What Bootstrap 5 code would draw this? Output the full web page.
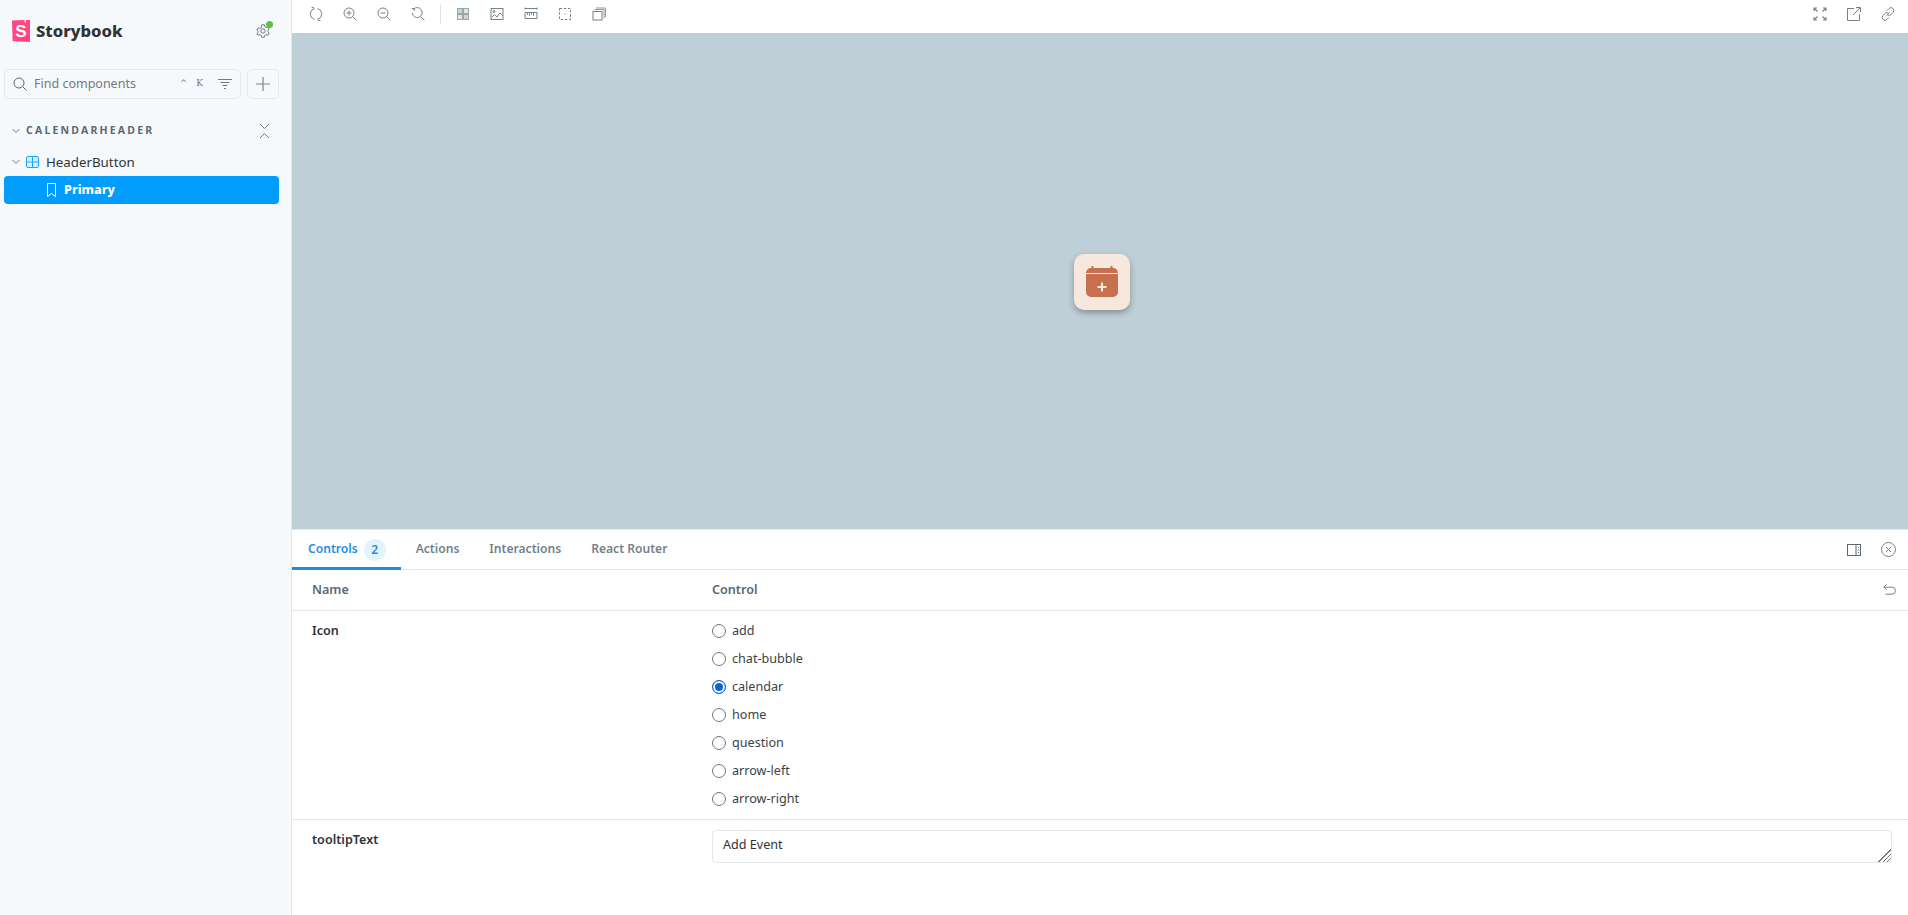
<!DOCTYPE html>
<html lang="en">
<head>
  <meta charset="UTF-8">
  <meta name="viewport" content="width=device-width, initial-scale=1.0">
  <title>Storybook - HeaderButton</title>
  <link href="https://cdn.jsdelivr.net/npm/bootstrap@5.3.0/dist/css/bootstrap.min.css" rel="stylesheet">
  <style>
    html, body {
      height: 100%;
    }
    body {
      font-family: "Noto Sans", "Open Sans", sans-serif;
      font-size: 12.6px;
      color: #2e3438;
      overflow: hidden;
    }
    svg {
      display: block;
      flex: none;
    }
    .sb-sidebar {
      width: 292px;
      height: 915px;
      flex: none;
      background: #f6f9fc;
      border-right: 1px solid #e3e8ec;
      padding: 20px 12px 0 4px;
    }
    .sb-brand {
      height: 22px;
      padding-left: 8px;
    }
    .sb-brand-name {
      margin-left: 6px;
      font-size: 16.6px;
      font-weight: 800;
      line-height: 22px;
      color: #333;
    }
    .sb-gear {
      margin-left: auto;
      margin-right: 9px;
      position: relative;
    }
    .sb-gear-dot {
      position: absolute;
      top: -3px;
      right: -3px;
      width: 7px;
      height: 7px;
      border-radius: 50%;
      background: #66bf3c;
    }
    .sb-search-row {
      margin-top: 27px;
      gap: 6px;
    }
    .sb-search {
      width: 237px;
      height: 30px;
      border: 1px solid #e4e9ed;
      border-radius: 5px;
      padding: 0 8px 0 8px;
      color: #6f7b83;
    }
    .sb-search-text {
      margin-left: 7px;
      font-size: 12.5px;
    }
    .sb-keys {
      margin-left: auto;
      margin-right: 15px;
      gap: 9px;
      font-size: 9px;
      font-family: "DejaVu Serif", serif;
    }
    .sb-plus {
      width: 32px;
      height: 30px;
      border: 1px solid #e4e9ed;
      border-radius: 5px;
    }
    .sb-section {
      height: 20px;
      margin-top: 22px;
      margin-bottom: -1px;
      padding-left: 8px;
    }
    .sb-section-name {
      margin-left: 6px;
      font-size: 10.5px;
      font-weight: 700;
      letter-spacing: 2.2px;
      color: #5c6870;
    }
    .sb-collapse {
      margin-left: auto;
      margin-right: 9px;
    }
    .sb-item {
      height: 26px;
      margin-top: 9px;
      padding-left: 8px;
    }
    .sb-item-name {
      margin-left: 7px;
      padding-top: 1px;
      font-size: 13.3px;
    }
    .sb-item-icon {
      margin-left: 6px;
    }
    .sb-selected {
      height: 28px;
      margin-top: 1px;
      padding-left: 43px;
      background: #029cfd;
      border-radius: 4px;
      color: #fff;
      font-weight: 800;
    }
    .sb-selected span {
      margin-left: 8px;
      padding-top: 1px;
    }
    .sb-toolbar {
      height: 33px;
      flex: none;
      padding: 0 6px 6px 10px;
    }
    .sb-tool-group {
      gap: 6px;
    }
    .sb-tool {
      width: 28px;
      height: 27px;
    }
    .sb-tool-sep {
      width: 1px;
      height: 20px;
      margin: 0 8px;
      background: #dfe4e7;
    }
    .sb-canvas {
      padding: 2px 0 0 4px;
      background: #bfcfd7;
    }
    .sb-header-button {
      width: 56px;
      height: 56px;
      border-radius: 10px;
      background: #f7e8de;
      box-shadow: 0 3px 6px rgba(0, 0, 0, 0.3);
    }
    .sb-panel {
      height: 386px;
      flex: none;
      background: #fff;
    }
    .sb-tabs {
      height: 41px;
      border-top: 1px solid #e3e8ec;
      border-bottom: 1px solid #e3e8ec;
    }
    .sb-tab {
      height: 40px;
      padding: 3px 15px 0;
      font-size: 12.1px;
      font-weight: 600;
      color: #73828c;
      border-bottom: 3px solid transparent;
    }
    .sb-tab-active {
      padding-left: 16px;
      color: #1b8fe6;
      border-bottom-color: #1b8fe6;
    }
    .sb-count {
      width: 22px;
      height: 22px;
      margin-left: 6px;
      border-radius: 50%;
      background: #e3f3fe;
      font-size: 12px;
      line-height: 22px;
      text-align: center;
    }
    .sb-panel-tools {
      gap: 20px;
      padding-right: 12px;
    }
    .sb-args-head {
      height: 41px;
      padding-left: 20px;
      border-bottom: 1px solid #e3e8ec;
      font-weight: 600;
      color: #5c6870;
    }
    .sb-col-name {
      width: 400px;
      flex: none;
      font-weight: 600;
    }
    .sb-undo {
      margin-left: auto;
      margin-right: 12px;
    }
    .sb-arg-row {
      padding-left: 20px;
    }
    .sb-icon-row {
      height: 209px;
      padding-top: 6px;
      border-bottom: 1px solid #e3e8ec;
    }
    .sb-icon-row .sb-col-name {
      padding-top: 4px;
      line-height: 20px;
    }
    .sb-radio {
      height: 28px;
      margin: 0;
      padding: 0;
      gap: 6px;
      min-height: 0;
      color: #3a4348;
    }
    .sb-radio .form-check-input {
      float: none;
      width: 14px;
      height: 14px;
      margin: 0;
      border-color: #767676;
    }
    .sb-radio .form-check-input:checked {
      background-color: #0b63d9;
      background-image: none;
      border-color: #0b63d9;
      box-shadow: inset 0 0 0 2px #fff;
    }
    .sb-text-row {
      padding-top: 10px;
    }
    .sb-text-row .sb-col-name {
      padding-top: 1px;
    }
    .sb-text-input {
      width: 1180px;
      height: 32px;
      min-height: 32px;
      padding: 5px 10px;
      border: 1px solid #e3e8ec;
      border-radius: 4px;
      font-size: 12.6px;
      line-height: 18px;
      color: #2e3438;
      resize: vertical;
    }
    .sb-text-input::-webkit-resizer {
      background:
        linear-gradient(135deg, #fff 50%, transparent 50%),
        repeating-linear-gradient(135deg, #777 0 1px, #fff 1px 3px);
    }
  </style>
</head>
<body>
  <div class="d-flex">
    <aside class="sb-sidebar">
      <div class="sb-brand d-flex align-items-center">
        <svg width="18" height="22" viewBox="0 0 18 22">
          <path fill="#ff4785" d="M0 .6 12.600 0l-.1 2.400h1.400L14.100 0 18 0v22L.6 21.200z"/>
          <text x="9" y="17" fill="#fff" font-family="Liberation Sans, sans-serif" font-size="17" font-weight="700" text-anchor="middle">S</text>
        </svg>
        <span class="sb-brand-name">Storybook</span>
        <div class="sb-gear">
          <svg width="14" height="14" viewBox="0 0 14 14" fill="none" stroke="#6f7b83" stroke-width="1">
            <circle cx="7" cy="7" r="2.200"/>
            <path d="M5.700.8h2.600l.4 1.800 1.500.8 1.700-.6 1.300 2.300-1.300 1.200v1.400l1.300 1.200-1.300 2.300-1.700-.6-1.500.8-.4 1.800H5.700l-.4-1.800-1.500-.8-1.700.6L.8 9.900 2.100 8.700V7.300L.8 6.100l1.300-2.300 1.700.6 1.500-.8z"/>
          </svg>
          <span class="sb-gear-dot"></span>
        </div>
      </div>

      <div class="sb-search-row d-flex">
        <div class="sb-search d-flex align-items-center">
          <svg width="14" height="14" viewBox="0 0 14 14" fill="none" stroke="#5c6870" stroke-width="1">
            <circle cx="6" cy="6" r="5"/>
            <path d="m9.600 9.600 3.800 3.800"/>
          </svg>
          <span class="sb-search-text">Find components</span>
          <span class="sb-keys d-flex"><span>^</span><span>K</span></span>
          <svg width="14" height="10" viewBox="0 0 14 10" fill="none" stroke="#6f7b83" stroke-width="1">
            <path d="M0 .5h14M2.500 3.500h9M4.500 6.500h5M6 9.500h2"/>
          </svg>
        </div>
        <div class="sb-plus d-flex align-items-center justify-content-center">
          <svg width="14" height="14" viewBox="0 0 14 14" fill="none" stroke="#7b868d" stroke-width="1.200">
            <path d="M7 0v14M0 7h14"/>
          </svg>
        </div>
      </div>

      <div class="sb-section d-flex align-items-center">
        <svg width="8" height="6" viewBox="0 0 8 6" fill="none" stroke="#6f7b83" stroke-width="1">
          <path d="m.5 1 3.500 3.500L7.500 1"/>
        </svg>
        <span class="sb-section-name">CALENDARHEADER</span>
        <svg class="sb-collapse" width="11" height="16" viewBox="0 0 11 16" fill="none" stroke="#6f7b83" stroke-width="1">
          <path d="m1 1 4.500 4.500L10 1M1 15l4.500-4.500L10 15"/>
        </svg>
      </div>

      <div class="sb-item d-flex align-items-center">
        <svg width="8" height="6" viewBox="0 0 8 6" fill="none" stroke="#6f7b83" stroke-width="1">
          <path d="m.5 1 3.500 3.500L7.500 1"/>
        </svg>
        <svg class="sb-item-icon" width="13" height="12" viewBox="0 0 13 12" fill="#d6eefe" stroke="#1ea7fd" stroke-width="1">
          <rect x=".5" y=".5" width="12" height="11" rx="1.500"/>
          <path d="M6.500 .5v11M.5 6h12"/>
        </svg>
        <span class="sb-item-name">HeaderButton</span>
      </div>
      <div class="sb-selected d-flex align-items-center">
        <svg width="9" height="14" viewBox="0 0 9 14" fill="none" stroke="#fff" stroke-width="1">
          <path d="M.5 .5h8v13l-4-3-4 3z"/>
        </svg>
        <span>Primary</span>
      </div>
    </aside>

    <main class="d-flex flex-column flex-grow-1 vh-100">
      <div class="sb-toolbar d-flex align-items-center justify-content-between">
        <div class="d-flex align-items-center">
          <div class="sb-tool-group d-flex">
            <div class="sb-tool d-flex align-items-center justify-content-center">
              <svg width="14" height="14" viewBox="0 0 14 14" fill="none" stroke="#73828c" stroke-width="1">
                <path d="M4.500 1.900A5.700 5.700 0 0 0 5.500 12.500M9.500 12.100A5.700 5.700 0 0 0 8.500 1.500"/>
                <path d="M2.600 .6h2.200v2.200M11.400 13.400H9.200v-2.200"/>
              </svg>
            </div>
            <div class="sb-tool d-flex align-items-center justify-content-center">
              <svg width="14" height="14" viewBox="0 0 14 14" fill="none" stroke="#73828c" stroke-width="1">
                <circle cx="6" cy="6" r="5"/>
                <path d="m9.600 9.600 3.800 3.800M6 3.500v5M3.500 6h5"/>
              </svg>
            </div>
            <div class="sb-tool d-flex align-items-center justify-content-center">
              <svg width="14" height="14" viewBox="0 0 14 14" fill="none" stroke="#73828c" stroke-width="1">
                <circle cx="6" cy="6" r="5"/>
                <path d="m9.600 9.600 3.800 3.800M3.500 6h5"/>
              </svg>
            </div>
            <div class="sb-tool d-flex align-items-center justify-content-center">
              <svg width="14" height="14" viewBox="0 0 14 14" fill="none" stroke="#73828c" stroke-width="1">
                <path d="M2.500 2.200A5 5 0 1 1 1.200 6"/>
                <path d="M.8 1.500h2.400v2.400M9.800 9.800l3.600 3.600"/>
              </svg>
            </div>
          </div>
          <span class="sb-tool-sep"></span>
          <div class="sb-tool-group d-flex">
            <div class="sb-tool d-flex align-items-center justify-content-center">
              <svg width="14" height="14" viewBox="0 0 14 14" fill="#e1e5e8" stroke="#9aa5ac" stroke-width="1">
                <rect x="1.500" y="1.500" width="5" height="5" fill="#ccd3d7"/>
                <rect x="7.500" y="1.500" width="5" height="5"/>
                <rect x="1.500" y="7.500" width="5" height="5"/>
                <rect x="7.500" y="7.500" width="5" height="5" fill="#ccd3d7"/>
              </svg>
            </div>
            <div class="sb-tool d-flex align-items-center justify-content-center">
              <svg width="14" height="14" viewBox="0 0 14 14" fill="none" stroke="#73828c" stroke-width="1">
                <rect x="1" y="1.500" width="12" height="11"/>
                <path d="m1.500 10.500 3-3 2.500 2.500 3-4 3 3"/>
                <circle cx="4" cy="4.500" r="1"/>
              </svg>
            </div>
            <div class="sb-tool d-flex align-items-center justify-content-center">
              <svg width="14" height="14" viewBox="0 0 14 14" fill="none" stroke="#73828c" stroke-width="1">
                <path d="M1 1.500h12M1 5.500h12M1 11.500h12M1 5.500v6M13 5.500v6M1 .5v2M13 .5v2"/>
                <path d="M3.500 6v2M5.500 6v3M7.500 6v2M9.500 6v3" stroke-width=".9"/>
              </svg>
            </div>
            <div class="sb-tool d-flex align-items-center justify-content-center">
              <svg width="14" height="14" viewBox="0 0 14 14" fill="none" stroke="#73828c" stroke-width="1">
                <rect x="1.500" y="1.500" width="11" height="11" stroke-dasharray="2.500 1.700"/>
                <path d="M6.500 7h1"/>
              </svg>
            </div>
            <div class="sb-tool d-flex align-items-center justify-content-center">
              <svg width="14" height="14" viewBox="0 0 14 14" fill="none" stroke="#73828c" stroke-width="1">
                <rect x="1" y="4.500" width="9" height="8.500"/>
                <path d="M2.500 2.500h9.500v9M4 1h9.500v9" stroke-width=".8"/>
              </svg>
            </div>
          </div>
        </div>
        <div class="sb-tool-group d-flex">
          <div class="sb-tool d-flex align-items-center justify-content-center">
            <svg width="14" height="14" viewBox="0 0 14 14" fill="none" stroke="#73828c" stroke-width="1.100">
              <path d="M1 1l3.500 3.500M13 1 9.500 4.500M1 13l3.500-3.500M13 13 9.500 9.500M1 4V1h3M10 1h3v3M1 10v3h3M10 13h3v-3"/>
            </svg>
          </div>
          <div class="sb-tool d-flex align-items-center justify-content-center">
            <svg width="14" height="14" viewBox="0 0 14 14" fill="none" stroke="#73828c" stroke-width="1">
              <path d="M7 1.500H.5v12h12V7M6 8l7-7M9 .5h4.500V5"/>
            </svg>
          </div>
          <div class="sb-tool d-flex align-items-center justify-content-center">
            <svg width="14" height="14" viewBox="0 0 14 14" fill="none" stroke="#73828c" stroke-width="1">
              <path d="M5.500 8.500l3-3M6 3.500l2-2a2.800 2.800 0 0 1 4 4l-2 2a2.800 2.800 0 0 1-3.500.5M8 10.500l-2 2a2.800 2.800 0 0 1-4-4l2-2a2.800 2.800 0 0 1 3.500-.5"/>
            </svg>
          </div>
        </div>
      </div>

      <div class="sb-canvas flex-grow-1 d-flex align-items-center justify-content-center">
        <div class="sb-header-button d-flex align-items-center justify-content-center">
          <svg width="32" height="32" viewBox="0 0 32 32">
            <path fill="#c7704f" d="M5.500 0h2v3h-2zM24.500 0h2v3h-2z"/>
            <path fill="#c7704f" d="M0 7a5 5 0 0 1 5-5h22a5 5 0 0 1 5 5zM0 8h32v18a5 5 0 0 1-5 5H5a5 5 0 0 1-5-5z"/>
            <path fill="none" stroke="#f7e8de" stroke-width="2" d="M16 16.500v9M11.500 21h9"/>
          </svg>
        </div>
      </div>

      <section class="sb-panel">
        <div class="sb-tabs d-flex align-items-center justify-content-between">
          <div class="d-flex">
            <div class="sb-tab sb-tab-active d-flex align-items-center">Controls<span class="sb-count">2</span></div>
            <div class="sb-tab d-flex align-items-center">Actions</div>
            <div class="sb-tab d-flex align-items-center">Interactions</div>
            <div class="sb-tab d-flex align-items-center">React Router</div>
          </div>
          <div class="sb-panel-tools d-flex align-items-center">
            <svg width="14" height="14" viewBox="0 0 14 14" fill="none" stroke="#5c6870" stroke-width="1">
              <rect x=".5" y="1.500" width="13" height="11"/>
              <path d="M9 1.500v11M11 4.500h1M11 7h1M11 9.500h1"/>
            </svg>
            <svg width="15" height="15" viewBox="0 0 15 15" fill="none" stroke="#73828c" stroke-width="1">
              <circle cx="7.500" cy="7.500" r="7"/>
              <path d="m5 5 5 5M10 5l-5 5"/>
            </svg>
          </div>
        </div>

        <div class="sb-args-head d-flex align-items-center">
          <div class="sb-col-name">Name</div>
          <div>Control</div>
          <svg class="sb-undo" width="13" height="12" viewBox="0 0 13 12" fill="none" stroke="#73828c" stroke-width="1">
            <path d="M3.500 .5 .8 3.200l2.700 2.700M1 3.200h8a3.300 3.300 0 0 1 0 7H2.500"/>
          </svg>
        </div>

        <div class="sb-arg-row sb-icon-row d-flex">
          <div class="sb-col-name">Icon</div>
          <div>
            <label class="sb-radio form-check d-flex align-items-center"><input class="form-check-input" type="radio" name="icon">add</label>
            <label class="sb-radio form-check d-flex align-items-center"><input class="form-check-input" type="radio" name="icon">chat-bubble</label>
            <label class="sb-radio form-check d-flex align-items-center"><input class="form-check-input" type="radio" name="icon" checked>calendar</label>
            <label class="sb-radio form-check d-flex align-items-center"><input class="form-check-input" type="radio" name="icon">home</label>
            <label class="sb-radio form-check d-flex align-items-center"><input class="form-check-input" type="radio" name="icon">question</label>
            <label class="sb-radio form-check d-flex align-items-center"><input class="form-check-input" type="radio" name="icon">arrow-left</label>
            <label class="sb-radio form-check d-flex align-items-center"><input class="form-check-input" type="radio" name="icon">arrow-right</label>
          </div>
        </div>

        <div class="sb-arg-row sb-text-row d-flex">
          <div class="sb-col-name">tooltipText</div>
          <textarea class="sb-text-input form-control" rows="1">Add Event</textarea>
        </div>
      </section>
    </main>
  </div>
  <script src="https://cdn.jsdelivr.net/npm/bootstrap@5.3.0/dist/js/bootstrap.bundle.min.js"></script>
</body>
</html>
